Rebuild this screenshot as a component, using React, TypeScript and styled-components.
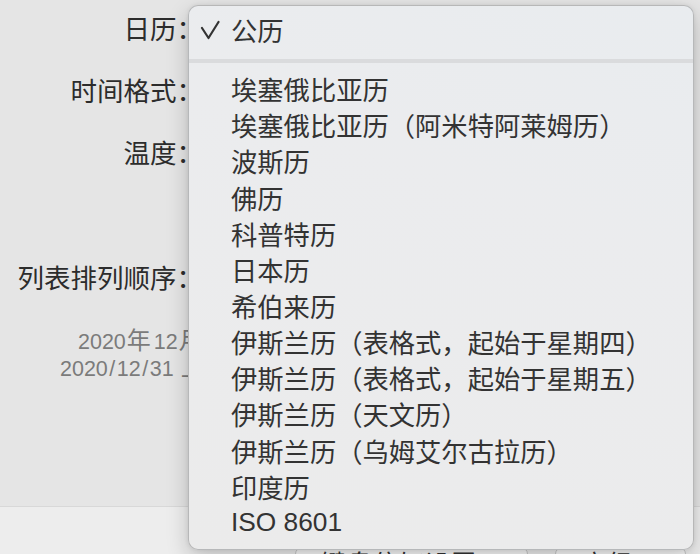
import React from "react";
import styled, { createGlobalStyle } from "styled-components";

const Global = createGlobalStyle`
  html, body { margin: 0; padding: 0; }
  body {
    font-family: "Liberation Sans", "Noto Sans CJK SC", sans-serif;
    background: #e5e5e5;
  }
`;

const Window = styled.div`
  position: relative;
  width: 700px;
  height: 554px;
  overflow: hidden;
  display: flex;
  flex-direction: column;
  background: #e5e5e5;
`;

const Form = styled.div`
  flex: 1;
  display: flex;
  flex-direction: column;
  padding-top: 11.5px;
`;

const Row = styled.div<{ $gap: number }>`
  display: flex;
  align-items: center;
  height: 36px;
  margin-top: ${(p) => p.$gap}px;
`;

const Label = styled.div`
  width: 203px;
  text-align: right;
  font-size: 26.5px;
  line-height: 36px;
  color: #2c2c2c;
  white-space: nowrap;
`;

const Preview = styled.div`
  margin-top: 32px;
  display: flex;
  flex-direction: column;
  font-size: 21.5px;
  color: #7b7b7b;
`;

const PreviewLine = styled.div<{ $indent: number }>`
  height: 27px;
  line-height: 27px;
  padding-left: ${(p) => p.$indent}px;
  white-space: nowrap;
`;

const Cjk = styled.span`
  font-family: "Noto Sans CJK SC", sans-serif;
  font-size: 24px;
  line-height: 0;
  margin: 0 3px 0 1px;
`;

const Slash = styled.span`
  margin: 0 1.5px;
`;

const Footer = styled.div`
  height: 48px;
  flex-shrink: 0;
  box-sizing: border-box;
  border-top: 1px solid #d8d8d8;
  background: #ededed;
  display: flex;
  gap: 27px;
  padding: 40px 0 0 295px;
`;

const Button = styled.div<{ $w: number }>`
  width: ${(p) => p.$w}px;
  height: 36px;
  flex-shrink: 0;
  box-sizing: border-box;
  border: 1px solid #c6c6c6;
  border-radius: 7px;
  background: #f7f7f7;
  font-size: 26px;
  line-height: 34px;
  color: #333;
  text-align: center;
  white-space: nowrap;
  overflow: hidden;
`;

const Menu = styled.div`
  position: absolute;
  left: 188px;
  top: 5px;
  width: 506px;
  height: 545px;
  box-sizing: border-box;
  padding: 5.5px 0 8.5px;
  border: 1px solid rgba(0, 0, 0, 0.22);
  border-radius: 10px;
  background: linear-gradient(200deg, #e9ecef 0%, #ebecee 35%, #ebebeb 100%);
  box-shadow: 0 8px 22px rgba(0, 0, 0, 0.2), 0 0 4px rgba(0, 0, 0, 0.08);
`;

const Item = styled.div<{ $h: number }>`
  display: flex;
  align-items: center;
  height: ${(p) => p.$h}px;
  font-size: 26.3px;
  color: #333;
  white-space: nowrap;
`;

const Gutter = styled.span`
  width: 42px;
  flex-shrink: 0;
  display: flex;
  justify-content: center;
  align-items: center;
`;

const Separator = styled.div`
  height: 4px;
  margin: 11px 0 8px;
  background: #dadbdd;
`;

const Check = () => (
  <svg width="20" height="20" viewBox="0 0 20 20">
    <path
      d="M2 8 L8.5 18 L18.5 2"
      fill="none"
      stroke="#333"
      strokeWidth="2.2"
      strokeLinecap="round"
      strokeLinejoin="round"
    />
  </svg>
);

const calendars = [
  "埃塞俄比亚历",
  "埃塞俄比亚历（阿米特阿莱姆历）",
  "波斯历",
  "佛历",
  "科普特历",
  "日本历",
  "希伯来历",
  "伊斯兰历（表格式，起始于星期四）",
  "伊斯兰历（表格式，起始于星期五）",
  "伊斯兰历（天文历）",
  "伊斯兰历（乌姆艾尔古拉历）",
  "印度历",
  "ISO 8601",
];

export default function App() {
  return (
    <>
      <Global />
      <Window>
        <Form>
          <Row $gap={0}>
            <Label>日历：</Label>
          </Row>
          <Row $gap={26}>
            <Label>时间格式：</Label>
          </Row>
          <Row $gap={26}>
            <Label>温度：</Label>
          </Row>
          <Row $gap={89}>
            <Label>列表排列顺序：</Label>
          </Row>
          <Preview>
            <PreviewLine $indent={78}>
              2020<Cjk>年</Cjk>12<Cjk>月</Cjk>31<Cjk>日</Cjk>
            </PreviewLine>
            <PreviewLine $indent={60}>
              2020<Slash>/</Slash>12<Slash>/</Slash>31 <Cjk>上午</Cjk>9:41
            </PreviewLine>
          </Preview>
        </Form>
        <Footer>
          <Button $w={233}>键盘偏好设置…</Button>
          <Button $w={131}>高级…</Button>
        </Footer>
        <Menu>
          <Item $h={36}>
            <Gutter>
              <Check />
            </Gutter>
            公历
          </Item>
          <Separator />
          {calendars.map((c) => (
            <Item key={c} $h={36.17}>
              <Gutter />
              {c}
            </Item>
          ))}
        </Menu>
      </Window>
    </>
  );
}
